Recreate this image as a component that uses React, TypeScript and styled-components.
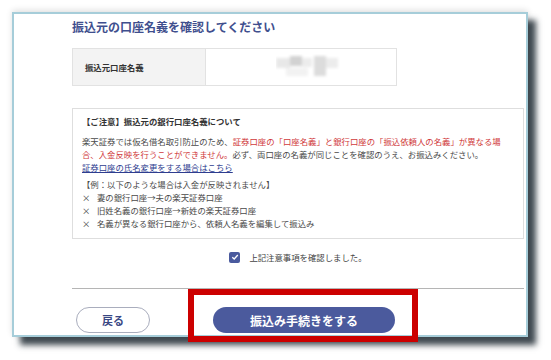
import React from 'react'
import styled, { createGlobalStyle } from 'styled-components'

const GlobalStyle = createGlobalStyle`
  html, body {
    margin: 0;
    padding: 0;
    background: #ffffff;
  }
  body {
    font-family: "Noto Sans CJK JP", "Noto Sans", sans-serif;
    color: #4a4a4a;
  }
`

const Page = styled.div`
  position: relative;
  width: 551px;
  height: 360px;
  padding: 12px 0 0 12px;
  box-sizing: border-box;
`

const Frame = styled.div`
  width: 516px;
  height: 325px;
  box-sizing: border-box;
  border: 2px solid #a6cdd9;
  background: #ffffff;
  overflow: hidden;
  box-shadow: 8px 8px 6px rgba(30, 42, 50, 0.85), 0 -2px 6px rgba(0, 0, 0, 0.12);
  padding: 5px 2px 0 58px;
`

const Title = styled.h1`
  margin: 0;
  font-size: 12px;
  line-height: 16px;
  font-weight: 700;
  color: #3f4f8e;
`

const NameTable = styled.div`
  display: flex;
  width: 325px;
  height: 38px;
  margin-top: 13px;
  border: 1px solid #e2e2e2;
  box-sizing: border-box;
`

const LabelCell = styled.div`
  width: 120px;
  background: #f3f3f3;
  border-right: 1px solid #e2e2e2;
  display: flex;
  align-items: center;
  padding-left: 12px;
  font-size: 8.4px;
  font-weight: 700;
  color: #333333;
`

const ValueCell = styled.div`
  flex: 1;
  display: flex;
  align-items: center;
  justify-content: center;
  padding-left: 20px;
`

const Notice = styled.div`
  margin-top: 22px;
  border: 1px solid #dedede;
  padding: 6px 16px 8px 9px;
  font-size: 8.4px;
  line-height: 13px;
`

const NoticeHeading = styled.div`
  font-weight: 700;
  color: #333333;
  margin-bottom: 7px;
`

const Body = styled.div`
  margin: 0 0 4px;
`

const Line = styled.div`
  white-space: nowrap;
`

const Red = styled.span`
  color: #d0393b;
`

const Link = styled.a`
  color: #2e3d8f;
  text-decoration: underline;
`

const ExampleList = styled.ul`
  list-style: none;
  margin: 0;
  padding: 0;
`

const ExampleItem = styled.li`
  display: flex;
  gap: 9px;
`

const Cross = styled.span`
  width: 6px;
`

const CheckRow = styled.label`
  display: flex;
  justify-content: center;
  align-items: center;
  gap: 9px;
  margin-top: 11px;
  height: 14px;
  font-size: 8.4px;
  color: #444444;
`

const CheckBox = styled.span`
  width: 11px;
  height: 11px;
  border-radius: 2px;
  background: #4a5a9e;
  display: flex;
  align-items: center;
  justify-content: center;
`

const Divider = styled.hr`
  margin: 24px 0 0;
  border: 0;
  border-top: 1px solid #b5b5b5;
`

const Footer = styled.div`
  display: flex;
  align-items: center;
  padding: 18px 0 0 4px;
  gap: 63px;
`

const Button = styled.button<{ $primary?: boolean }>`
  height: 26px;
  width: ${p => (p.$primary ? '182px' : '74px')};
  border-radius: 13px;
  box-sizing: border-box;
  font-family: inherit;
  font-size: ${p => (p.$primary ? '12px' : '11px')};
  font-weight: 700;
  cursor: pointer;
  border: ${p => (p.$primary ? '0' : '1px solid #a9adbd')};
  background: ${p => (p.$primary ? '#4b5a9d' : '#ffffff')};
  color: ${p => (p.$primary ? '#ffffff' : '#3a4884')};
`

const Highlight = styled.div`
  position: absolute;
  left: 188px;
  top: 289px;
  width: 230px;
  height: 53px;
  box-sizing: border-box;
  border: 6px solid #cc0000;
  pointer-events: none;
`

function BlurredName() {
  return (
    <svg width="70" height="26" viewBox="0 0 70 26">
      <defs>
        <filter id="b" x="-20%" y="-20%" width="140%" height="140%">
          <feGaussianBlur stdDeviation="1.6" />
        </filter>
      </defs>
      <g filter="url(#b)">
        <rect x="0" y="4" width="14" height="10" fill="#e8e8e8" />
        <rect x="14" y="2" width="12" height="10" fill="#d2d2d2" />
        <rect x="26" y="4" width="10" height="9" fill="#ececec" />
        <rect x="38" y="2" width="12" height="20" fill="#dcdcdc" />
        <rect x="50" y="4" width="12" height="10" fill="#ececec" />
        <rect x="10" y="14" width="22" height="8" fill="#f2f2f2" />
      </g>
    </svg>
  )
}

export default function App() {
  return (
    <>
      <GlobalStyle />
      <Page>
        <Frame>
          <Title>振込元の口座名義を確認してください</Title>
          <NameTable>
            <LabelCell>振込元口座名義</LabelCell>
            <ValueCell>
              <BlurredName />
            </ValueCell>
          </NameTable>

          <Notice>
            <NoticeHeading>【ご注意】振込元の銀行口座名義について</NoticeHeading>
            <Body>
              <Line>
                楽天証券では仮名借名取引防止のため、
                <Red>証券口座の「口座名義」と銀行口座の「振込依頼人の名義」が異なる場</Red>
              </Line>
              <Line>
                <Red>合、入金反映を行うことができません。</Red>
                必ず、両口座の名義が同じことを確認のうえ、お振込みください。
              </Line>
              <Line>
                <Link href="#">証券口座の氏名変更をする場合はこちら</Link>
              </Line>
            </Body>
            <div>【例：以下のような場合は入金が反映されません】</div>
            <ExampleList>
              <ExampleItem>
                <Cross>×</Cross>妻の銀行口座→夫の楽天証券口座
              </ExampleItem>
              <ExampleItem>
                <Cross>×</Cross>旧姓名義の銀行口座→新姓の楽天証券口座
              </ExampleItem>
              <ExampleItem>
                <Cross>×</Cross>名義が異なる銀行口座から、依頼人名義を編集して振込み
              </ExampleItem>
            </ExampleList>
          </Notice>

          <CheckRow>
            <CheckBox>
              <svg width="8" height="8" viewBox="0 0 8 8">
                <path d="M1.3 4.2 L3.2 6 L6.8 2" fill="none" stroke="#ffffff" strokeWidth="1.3" />
              </svg>
            </CheckBox>
            上記注意事項を確認しました。
          </CheckRow>

          <Divider />

          <Footer>
            <Button>戻る</Button>
            <Button $primary>振込み手続きをする</Button>
          </Footer>
        </Frame>
        <Highlight />
      </Page>
    </>
  )
}
